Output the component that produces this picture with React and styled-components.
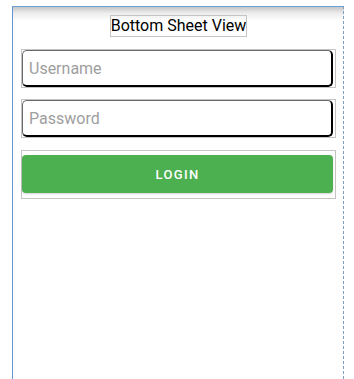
import React from 'react';
import styled, { createGlobalStyle } from 'styled-components';

const GlobalStyle = createGlobalStyle`
  html, body {
    margin: 0;
    padding: 0;
    background: #ffffff;
    font-family: Roboto, "Noto Sans", Arial, sans-serif;
  }
  * {
    box-sizing: border-box;
  }
`;

const Frame = styled.div`
  margin: 6px 0 0 12px;
  width: 332px;
  min-height: 373px;
  border-top: 1px solid #6a9fd8;
  border-left: 1px solid #5b9bd5;
  border-right: 1px dashed #7f9fc2;
  background: linear-gradient(#c6c6c6 0px, #ececec 6px, #ffffff 14px);
  padding: 8px 7px 0 8px;
  display: flex;
  flex-direction: column;
`;

const TitleBox = styled.div`
  align-self: center;
  border: 1px solid #c4c4c4;
  font-size: 16px;
  line-height: 20px;
  color: #000;
  padding: 0;
  margin-bottom: 12px;
`;

const FieldBox = styled.div`
  border: 1px solid #c4c4c4;
  margin-bottom: ${({ gap }) => gap}px;
`;

const Input = styled.input`
  display: block;
  width: calc(100% - 2px);
  height: 37px;
  margin: 0;
  padding: 0 6px;
  border: 1px solid #6a6a6a;
  border-right: 2px solid #000;
  border-bottom: 2px solid #000;
  border-radius: 5px;
  background: #fff;
  font-family: Roboto, "Noto Sans", Arial, sans-serif;
  font-size: 16px;
  color: #212121;
  outline: none;

  &::placeholder {
    color: #9e9e9e;
  }
`;

const ButtonBox = styled.div`
  border: 1px solid #c4c4c4;
  padding: 4px 0 5px 0;
`;

const LoginButton = styled.button`
  display: block;
  width: calc(100% - 2px);
  height: 38px;
  margin: 0;
  border: none;
  border-radius: 4px;
  background: #4caf50;
  box-shadow: 0 1px 2px rgba(0, 0, 0, 0.18);
  color: #ffffff;
  font-family: Roboto, "Noto Sans", Arial, sans-serif;
  font-size: 13px;
  font-weight: 500;
  letter-spacing: 1.3px;
  text-transform: uppercase;
  cursor: pointer;
`;

const App = () => {
  return (
    <>
      <GlobalStyle />
      <Frame>
        <TitleBox>Bottom Sheet View</TitleBox>
        <FieldBox gap={11}>
          <Input type="text" placeholder="Username" />
        </FieldBox>
        <FieldBox gap={12}>
          <Input type="password" placeholder="Password" />
        </FieldBox>
        <ButtonBox>
          <LoginButton>Login</LoginButton>
        </ButtonBox>
      </Frame>
    </>
  );
};

export default App;
